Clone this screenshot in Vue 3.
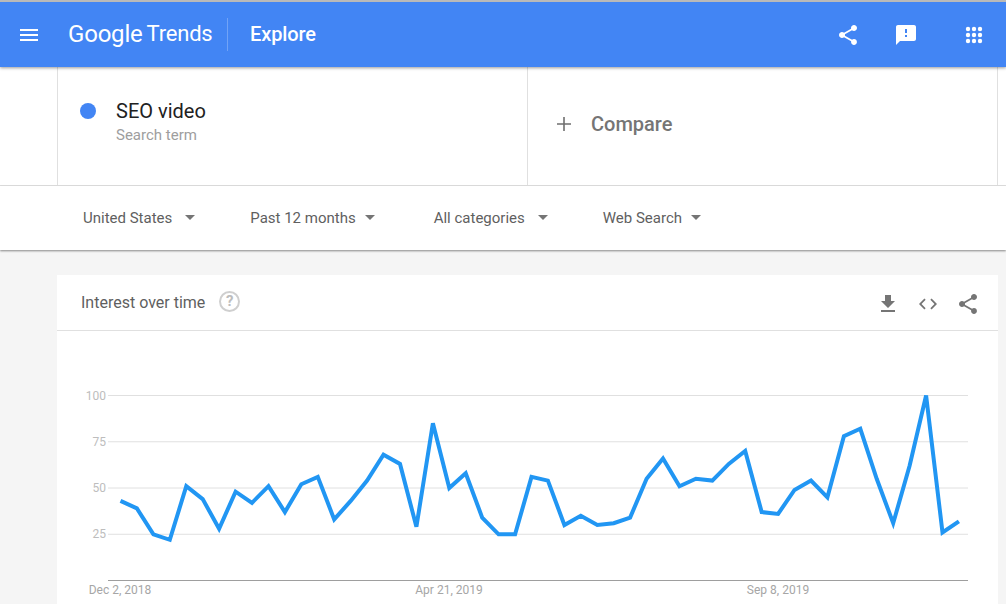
<script setup>
const values = [43,39,25,22,51,44,28,48,42,51,37,52,56,33,43,54,68,63,29,85,50,58,34,25,25,56,54,30,35,30,31,34,55,66,51,55,54,63,70,37,36,49,54,45,78,82,55,31,62,100,26,32]
const yOf = v => 64.5 + (100 - v) * 1.85
const points = values.map((v, i) => `${(63.5 + i * 16.44).toFixed(1)},${yOf(v).toFixed(1)}`).join(' ')
const grid = [100, 75, 50, 25]
const dates = [
  { label: 'Dec 2, 2018', x: 63 },
  { label: 'Apr 21, 2019', x: 392 },
  { label: 'Sep 8, 2019', x: 721 }
]
const filters = ['United States', 'Past 12 months', 'All categories', 'Web Search']
</script>

<template>
  <div class="page">
    <header class="topbar">
      <svg class="menu" width="18" height="12" viewBox="0 0 18 12"><path d="M0 0h18v2H0zM0 5h18v2H0zM0 10h18v2H0z" fill="#fff"/></svg>
      <div class="logo"><span class="g">Google</span><span class="t">Trends</span></div>
      <div class="sep"></div>
      <div class="explore">Explore</div>
      <div class="actions">
        <svg width="24" height="24" viewBox="0 0 24 24"><path fill="#fff" d="M18 16.08c-.76 0-1.44.3-1.96.77L8.91 12.7c.05-.23.09-.46.09-.7s-.04-.47-.09-.7l7.05-4.11c.54.5 1.25.81 2.04.81 1.66 0 3-1.34 3-3s-1.34-3-3-3-3 1.34-3 3c0 .24.04.47.09.7L8.04 9.81C7.5 9.31 6.79 9 6 9c-1.66 0-3 1.34-3 3s1.34 3 3 3c.79 0 1.5-.31 2.04-.81l7.12 4.16c-.05.21-.08.43-.08.65 0 1.61 1.31 2.92 2.92 2.92 1.61 0 2.92-1.31 2.92-2.92s-1.31-2.92-2.92-2.92z"/></svg>
        <svg width="24" height="24" viewBox="0 0 24 24"><path fill="#fff" d="M20 2H4c-1.1 0-1.99.9-1.99 2L2 22l4-4h14c1.1 0 2-.9 2-2V4c0-1.1-.9-2-2-2zm-7 12h-2v-2h2v2zm0-4h-2V6h2v4z"/></svg>
        <svg width="24" height="24" viewBox="0 0 24 24"><g fill="#fff"><circle cx="6" cy="6" r="2.2"/><circle cx="12" cy="6" r="2.2"/><circle cx="18" cy="6" r="2.2"/><circle cx="6" cy="12" r="2.2"/><circle cx="12" cy="12" r="2.2"/><circle cx="18" cy="12" r="2.2"/><circle cx="6" cy="18" r="2.2"/><circle cx="12" cy="18" r="2.2"/><circle cx="18" cy="18" r="2.2"/></g></svg>
      </div>
    </header>

    <section class="search">
      <div class="term">
        <span class="dot"></span>
        <div>
          <div class="term-name">SEO video</div>
          <div class="term-sub">Search term</div>
        </div>
      </div>
      <div class="compare">
        <svg width="14" height="14" viewBox="0 0 14 14"><path d="M6.2 0h1.6v14H6.2zM0 6.2h14v1.6H0z" fill="#6f6f6f"/></svg>
        <span>Compare</span>
      </div>
    </section>

    <section class="filters">
      <div v-for="f in filters" :key="f" class="filter">
        <span>{{ f }}</span><i class="caret"></i>
      </div>
    </section>

    <main class="content">
      <article class="card">
        <div class="card-head">
          <span class="card-title">Interest over time</span>
          <span class="help">?</span>
          <div class="card-actions">
            <svg width="24" height="24" viewBox="0 0 24 24"><path fill="#757575" d="M19 9h-4V3H9v6H5l7 7 7-7zM5 18v2h14v-2H5z"/></svg>
            <svg width="24" height="24" viewBox="0 0 24 24"><path fill="#757575" d="M9.4 16.6 4.8 12l4.6-4.6L8 6l-6 6 6 6 1.4-1.4zm5.2 0 4.6-4.6-4.6-4.6L16 6l6 6-6 6-1.4-1.4z" transform="translate(12 12) scale(.9) translate(-12 -12)"/></svg>
            <svg width="24" height="24" viewBox="0 0 24 24"><path fill="#757575" d="M18 16.08c-.76 0-1.44.3-1.96.77L8.91 12.7c.05-.23.09-.46.09-.7s-.04-.47-.09-.7l7.05-4.11c.54.5 1.25.81 2.04.81 1.66 0 3-1.34 3-3s-1.34-3-3-3-3 1.34-3 3c0 .24.04.47.09.7L8.04 9.81C7.5 9.31 6.79 9 6 9c-1.66 0-3 1.34-3 3s1.34 3 3 3c.79 0 1.5-.31 2.04-.81l7.12 4.16c-.05.21-.08.43-.08.65 0 1.61 1.31 2.92 2.92 2.92 1.61 0 2.92-1.31 2.92-2.92s-1.31-2.92-2.92-2.92z"/></svg>
          </div>
        </div>
        <svg class="chart" width="941" height="274" viewBox="0 0 941 274">
          <g v-for="g in grid" :key="g">
            <line x1="51" x2="911" :y1="yOf(g)" :y2="yOf(g)" stroke="#e0e0e0" stroke-width="1"/>
            <text x="49" :y="yOf(g) + 4" text-anchor="end" class="axis-y">{{ g }}</text>
          </g>
          <line x1="51" x2="911" y1="249.5" y2="249.5" stroke="#9e9e9e" stroke-width="1"/>
          <text v-for="d in dates" :key="d.label" :x="d.x" y="263" text-anchor="middle" class="axis-x">{{ d.label }}</text>
          <polyline :points="points" fill="none" stroke="#2196f3" stroke-width="4" stroke-linejoin="miter" stroke-miterlimit="4"/>
        </svg>
      </article>
    </main>
  </div>
</template>

<style>
html, body { margin: 0; padding: 0; overflow: hidden; }
</style>

<style scoped>
.page {
  width: 1006px;
  height: 604px;
  overflow: hidden;
  background: #f5f5f5;
  font-family: Roboto, "Liberation Sans", sans-serif;
  border-top: 2px solid #b9b9b9;
  box-sizing: border-box;
}
.topbar {
  height: 65px;
  background: #4285f4;
  display: flex;
  align-items: center;
  color: #fff;
  padding-left: 20px;
  box-shadow: 0 1px 3px rgba(0, 0, 0, .4);
  position: relative;
  z-index: 2;
}
.logo {
  margin-left: 30px;
  font-size: 24px;
  display: flex;
  gap: 4px;
  width: 142px;
  letter-spacing: -.2px;
  padding-bottom: 2px;
  align-items: center;
}
.logo .t { font-size: 22px; letter-spacing: -.2px; }
.sep {
  width: 1px;
  height: 33px;
  background: rgba(255, 255, 255, .25);
  margin-left: 17px;
}
.explore {
  margin-left: 22px;
  font-size: 20px;
  font-weight: 500;
  letter-spacing: -.1px;
  padding-bottom: 1px;
}
.actions {
  margin-left: auto;
  margin-right: 20px;
  display: flex;
  gap: 34px;
}
.actions svg:last-child { margin-left: 10px; }
.search {
  height: 118px;
  background: #fff;
  display: flex;
  padding-left: 57px;
  border-bottom: 1px solid #e0e0e0;
}
.term, .compare {
  width: 470px;
  box-sizing: border-box;
  border-left: 1px solid #e0e0e0;
  display: flex;
  align-items: center;
}
.compare { border-right: 1px solid #e0e0e0; width: 471px; padding-left: 29px; gap: 20px; padding-bottom: 4px; }
.term { padding-left: 22px; gap: 20px; padding-bottom: 6px; }
.dot { width: 16px; height: 16px; border-radius: 50%; background: #4285f4; margin-bottom: 24px; }
.term-name { font-size: 20px; color: #212121; line-height: 24px; }
.term-sub { font-size: 15px; color: #9e9e9e; line-height: 24px; }
.compare span { font-size: 20px; font-weight: 500; color: #757575; }
.filters {
  height: 64px;
  background: #fff;
  display: flex;
  align-items: center;
  padding-left: 83px;
  box-shadow: 0 1px 2px rgba(0, 0, 0, .45);
  position: relative;
  z-index: 1;
  font-size: 15px;
  color: #5f5f5f;
}
.filter { display: flex; align-items: center; gap: 13px; margin-right: 55px; padding-bottom: 1px; }
.filter:nth-child(even) { gap: 9px; margin-right: 59px; }
.caret {
  width: 0;
  height: 0;
  border-left: 5px solid transparent;
  border-right: 5px solid transparent;
  border-top: 5px solid #757575;
}
.content { padding: 25px 0 0 57px; }
.card { width: 941px; background: #fff; }
.card-head {
  height: 56px;
  box-sizing: border-box;
  border-bottom: 1px solid #e0e0e0;
  display: flex;
  align-items: center;
  padding-left: 24px;
  padding-top: 2px;
}
.card-title { font-size: 16px; color: #5f5f5f; margin-bottom: 3px; }
.help {
  width: 17px;
  height: 17px;
  margin-left: 14px;
  margin-bottom: 5px;
  border: 2px solid #cfcfcf;
  border-radius: 50%;
  color: #bdbdbd;
  font-size: 15px;
  font-weight: 700;
  display: flex;
  align-items: center;
  justify-content: center;
}
.card-actions { margin-left: auto; margin-right: 18px; display: flex; gap: 16px; }
.chart { display: block; }
.axis-y { font-size: 12px; fill: #bdbdbd; }
.axis-x { font-size: 12px; fill: #a6a6a6; }
</style>
